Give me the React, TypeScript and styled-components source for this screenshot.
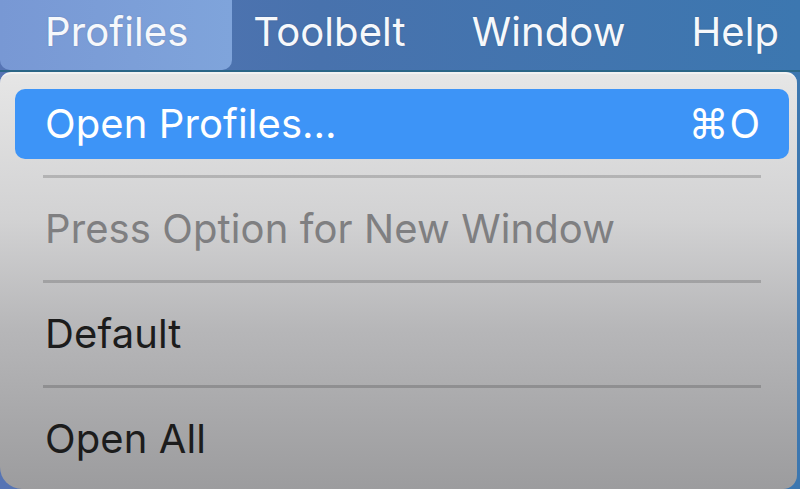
import styled, { createGlobalStyle } from 'styled-components';

const GlobalStyle = createGlobalStyle`
  html, body {
    margin: 0;
    padding: 0;
    background: #000;
  }
  body {
    font-family: 'Inter', 'Noto Sans', sans-serif;
    -webkit-font-smoothing: antialiased;
  }
`;

type Entry =
  | { kind: 'item'; label: string; shortcut?: string; active?: boolean; disabled?: boolean }
  | { kind: 'separator' };

const menuBar = ['Profiles', 'Toolbelt', 'Window', 'Help'];

const entries: Entry[] = [
  { kind: 'item', label: 'Open Profiles…', shortcut: '⌘O', active: true },
  { kind: 'separator' },
  { kind: 'item', label: 'Press Option for New Window', disabled: true },
  { kind: 'separator' },
  { kind: 'item', label: 'Default' },
  { kind: 'separator' },
  { kind: 'item', label: 'Open All' },
];

const App = () => {
  return (
    <Screen>
      <GlobalStyle />
      <Bar>
        {menuBar.map((name, i) => (
          <BarItem key={name} $active={i === 0}>
            {name}
          </BarItem>
        ))}
      </Bar>
      <Panel>
        {entries.map((entry, i) =>
          entry.kind === 'separator' ? (
            <Separator key={i} />
          ) : (
            <Row key={i} $active={entry.active} $disabled={entry.disabled}>
              <span>{entry.label}</span>
              {entry.shortcut && <Shortcut>{entry.shortcut}</Shortcut>}
            </Row>
          )
        )}
      </Panel>
    </Screen>
  );
};

const Screen = styled.div`
  width: 800px;
  height: 489px;
  overflow: hidden;
  display: flex;
  flex-direction: column;
  background: linear-gradient(90deg, #5674b4 0%, #4872ad 40%, #3c77b0 100%);
`;

const Bar = styled.div`
  display: flex;
  align-items: stretch;
  height: 70px;
  padding-left: 11px;
  border-bottom: 2px solid #2b6687;
  flex-shrink: 0;
`;

const BarItem = styled.div<{ $active?: boolean }>`
  display: flex;
  align-items: center;
  padding: 0 33px 7px;
  font-size: 40px;
  font-weight: 400;
  color: #f6f8fb;
  letter-spacing: 0.1px;
  text-shadow: 0 0 2px rgba(0, 0, 0, 0.15);

  ${p =>
    p.$active &&
    `
    margin: 0 -12px 0 -11px;
    padding-left: 45px;
    padding-right: 44px;
    background: linear-gradient(90deg, #7898d4, #7fa4db);
    border-radius: 0 0 10px 10px;
  `}
`;

const Panel = styled.div`
  flex: 1;
  width: 797px;
  box-sizing: border-box;
  padding: 15px 8px 15px 15px;
  border-radius: 11px 11px 14px 22px;
  border-top: 2px solid #f2f2f2;
  background: linear-gradient(180deg, #e6e6e6 0%, #d2d2d3 35%, #b6b6b8 62%, #9c9c9e 100%);
  display: flex;
  flex-direction: column;
`;

const Row = styled.div<{ $active?: boolean; $disabled?: boolean }>`
  height: 70px;
  flex-shrink: 0;
  display: flex;
  align-items: center;
  justify-content: space-between;
  padding: 0 28px 2px 30px;
  box-sizing: border-box;
  border-radius: 10px;
  font-size: 40px;
  font-weight: 400;
  letter-spacing: 0.1px;
  color: ${p => (p.$active ? '#ffffff' : p.$disabled ? '#7f7f81' : '#1c1c1c')};
  background: ${p => (p.$active ? '#3d94f7' : 'transparent')};
`;

const Shortcut = styled.span`
  letter-spacing: 1px;
`;

const Separator = styled.div`
  height: 35px;
  flex-shrink: 0;
  margin: 0 28px;
  display: flex;
  align-items: center;

  &::after {
    content: '';
    flex: 1;
    height: 3px;
    background: rgba(0, 0, 0, 0.17);
  }
`;

export default App;
